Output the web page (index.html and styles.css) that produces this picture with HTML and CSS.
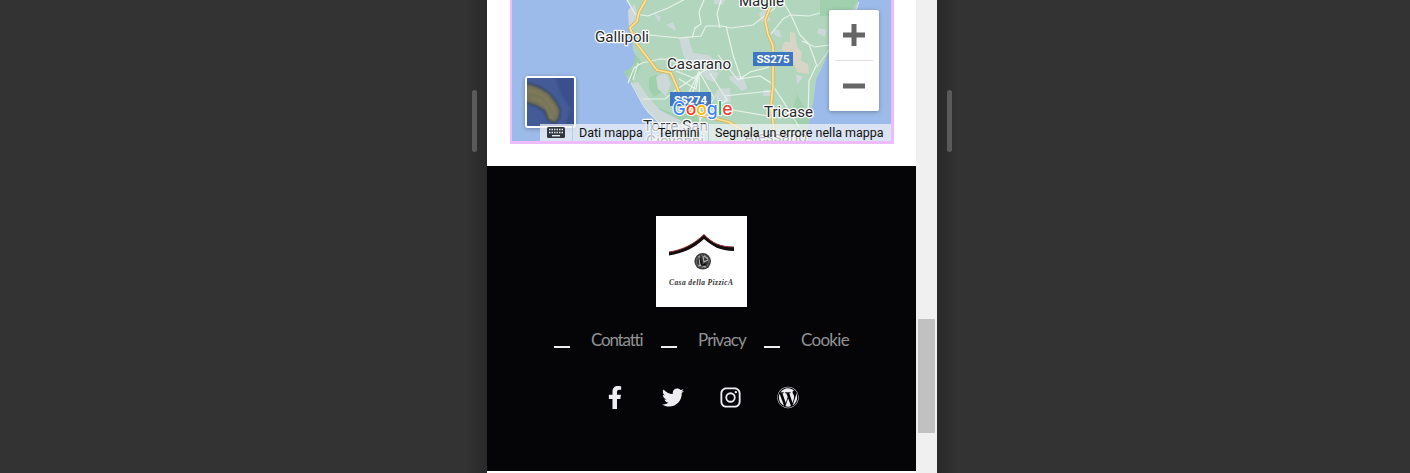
FILE: index.html
```html
<!DOCTYPE html>
<html lang="it">
<head>
<meta charset="utf-8">
<title>Casa della Pizzica</title>
<link rel="stylesheet" href="styles.css">
</head>
<body>
<div class="stage">
  <aside class="side side-left"><span class="handle"></span></aside>
  <main class="device">
    <div class="page">
      <section class="map-section">
        <div class="map">
          <svg class="map-canvas" viewBox="512 0 379 141" aria-hidden="true">
            <rect x="512" width="379" height="141" fill="#9dbbea"/>
            <path fill="#b2d6bd" d="M626 0L632 8 631 18 629 28 632 38 633 50 637 59 631 68 624 72 630 82 637 92 643 104 652 116 664 128 672 136 675 141H803L808 124 813 104 816 80 823 65 829 51 841 34 852 14 857 8 858 0Z"/>
            <g fill="#9bcda9">
              <path d="M635 54l7 8-3 8-7 12-8-10 9-5zM649 78l8-4 5 18-8 5-5-8zM648 104l26 10 20-4 8 17-20 10-17-5z" opacity=".8"/>
              <path d="M797 94l10 18 5-4-5 26-13-7-2-15zM820 0h38l-9 14-29 2z" opacity=".75"/>
            </g>
            <g fill="#cdd8d8">
              <path d="M632 83l6-1 10 15 12 13 20 10 15 15-10 3-18-9-20-17zM656 77l10-5 5 12-5 12-8-7zM628 10l7-6 2 10-5 20-3-6zM654 13l7 4-2 6zM666 25l7-3 3 9zM679 38l9-2 5 17 15 2 10 7-18 1-10 8-7-17zM642 31l5-2 4 6-8 1zM714 0l11 0-3 5-8-1zM759 13l7-3 5 11-9 1zM773 30l6 0 3 8-8-3zM730 76l13 0 4 12-5 3-13-12zM718 89l12-1 1 14-12 2-5-8zM796 74l7 3-6 8zM764 90l7 0 0 6-8 0zM819 28l8 2-2 7-8-4zM701 72l8-3 10 4-5 9-8-3z"/>
            </g>
            <path fill="#d9d5c6" d="M790 32l5 1 2 14 5 5-1 9 7 3 1 10-12-2-5-14-3-5-8-3 3-8 6 0z"/>
            <g fill="none" stroke="#e6f2ea" stroke-width="1.200">
              <path d="M627 0l8 14 13 2 20-8 25-13M649 35l31 3 21-2 5-10 16 0 9 2 22-3 22-17M692 38l3-10 6-4-2-12 5-12M720 28l-3-14 4-14M726 26l7 29 8 23-3 2-20-25M740 79l10-7 19-5M740 79l20-3 11 7 12 18 16 26M628 83l6-15 8-5 18-4 28 1M633 80l5-17M643 99h22l11-9 26-18 15-8M676 71l20 8M699 71l-3 18-17-10M699 71l-11 38M699 71l1 52M699 71l15 27M699 71l-18 39M710 73l17 27-18 13-27 0M724 96l47-5M714 98l-14 22M771 34l12-15 7-4 19 1 11-3M782 0l9 15 9 20 9 9 8 22M802 41l13 6 14-2M703 112l18 3 12-5 35 6M816 66l-7 15-1 36M757 0l12 12"/>
            </g>
            <g fill="none" stroke-linejoin="round">
              <path stroke="#d9b65e" stroke-width="3.400" d="M646 0l-7 12-2 9-7 7 7 16 20 26 14 3 8 19 14 21 36 9 17 10M770 8l-5 12 3 14 5 12v40l-2 20 4 32"/>
              <path stroke="#fce39b" stroke-width="1.700" d="M646 0l-7 12-2 9-7 7 7 16 20 26 14 3 8 19 14 21 36 9 17 10M770 8l-5 12 3 14 5 12v40l-2 20 4 32"/>
            </g>
            <path fill="none" stroke="#dfeaf0" d="M631 83l13 24 13 14 18 17M859 2l-3 8-6 3-11 20-10 17-12 17"/>
            <rect x="670" y="92" width="41" height="14" fill="#3f76c2"/>
            <rect x="753" y="52" width="40" height="14" fill="#3f76c2"/>
            <g class="road-label">
              <text x="674" y="103.500" textLength="33">SS274</text>
              <text x="756.500" y="63" textLength="33">SS275</text>
            </g>
            <g class="town-label">
              <text x="595" y="42" textLength="54" lengthAdjust="spacingAndGlyphs">Gallipoli</text>
              <text x="667" y="68.500" textLength="64" lengthAdjust="spacingAndGlyphs">Casarano</text>
              <text x="739" y="5.500" textLength="45" lengthAdjust="spacingAndGlyphs">Maglie</text>
              <text x="764" y="117" textLength="49" lengthAdjust="spacingAndGlyphs">Tricase</text>
              <text x="643" y="130.500" textLength="65" lengthAdjust="spacingAndGlyphs">Torre San</text>
              <text x="646" y="145.500" textLength="58" lengthAdjust="spacingAndGlyphs">Giovanni</text>
              <text x="744" y="141.500" textLength="63" lengthAdjust="spacingAndGlyphs">Alessano</text>
            </g>
            <text class="google-label" x="672.500" y="115" textLength="60" lengthAdjust="spacingAndGlyphs"><tspan fill="#4285f4">G</tspan><tspan fill="#ea4335">o</tspan><tspan fill="#fbbc05">o</tspan><tspan fill="#4285f4">g</tspan><tspan fill="#34a853">l</tspan><tspan fill="#ea4335">e</tspan></text>
          </svg>
          <div class="satellite">
            <svg viewBox="0 0 47 48" aria-hidden="true">
              <defs><filter id="soft"><feGaussianBlur stdDeviation=".8"/></filter></defs>
              <rect width="47" height="48" fill="#435c97"/>
              <path d="M28 0h19v48H38L43 30 35 18z" fill="#3b508d" filter="url(#soft)"/>
              <g filter="url(#soft)">
                <path d="M-2 5L6 7 14 10 22 15 29 24 33 32 32 40 28 45 21 42 18 33 10 28-2 24Z" fill="#74735a" stroke="#2c3b55" stroke-width="1.500"/>
                <path d="M0 13l9 1 9 5 7 9 3 8M3 20l10 2 7 7 5 12" fill="none" stroke="#827c59" stroke-width="2.500"/>
              </g>
            </svg>
          </div>
          <div class="zoom">
            <button class="zoom-button" aria-label="Zoom avanti"><svg viewBox="0 0 22 22"><path d="M8.500 0h5v8.500H22v5h-8.500V22h-5v-8.500H0v-5h8.500z"/></svg></button>
            <button class="zoom-button" aria-label="Zoom indietro"><svg viewBox="0 0 22 22"><path d="M0 8.500h22v5H0z"/></svg></button>
          </div>
          <div class="attribution">
            <span class="keys"><svg viewBox="0 0 18 11" aria-hidden="true"><rect width="18" height="11" rx="1.500" fill="#33383e"/><path d="M2 2.500h14M2 5.500h14" stroke="#e4eaf2" stroke-width="1.500" stroke-dasharray="1.500 1"/><path d="M5 8.700h8" stroke="#e4eaf2" stroke-width="1.400"/></svg></span>
            <span class="credit credit-data">Dati mappa</span>
            <span class="credit credit-terms">Termini</span>
            <span class="credit credit-report">Segnala un errore nella mappa</span>
          </div>
        </div>
      </section>
      <footer class="footer">
        <svg class="logo" viewBox="0 0 91 91" role="img" aria-label="Casa della Pizzica">
          <rect width="91" height="91" fill="#fff"/>
          <path d="M13 36C27 34 38 28 48 18.500 56 27 64 31 78 31V35C64 35 56 30 48 23 38 32.500 27 37 13 39.500Z" fill="#160c0d"/>
          <path d="M13 36C27 34 38 28 48 18.500 56 27 64 31 78 31" fill="none" stroke="#8c3036"/>
          <circle cx="46.700" cy="45.300" r="8.300" fill="#393939"/>
          <circle cx="46.700" cy="45.300" r="6.300" fill="none" stroke="#999" stroke-width=".8" stroke-dasharray="2 1"/>
          <path d="M43 40l1 9 6 2M47 40l1 6 4-2M42 50l6-2M48 40l4 3" fill="none" stroke="#b5b5b5" stroke-width="1.100"/>
          <path d="M44 42l2 7 4-1" fill="none" stroke="#111" stroke-width="1.500"/>
          <text class="logo-text" x="13" y="69" textLength="64">Casa della PizzicA</text>
        </svg>
        <nav class="links">
          <a class="link link-contact">Contatti</a>
          <a class="link link-privacy">Privacy</a>
          <a class="link link-cookie">Cookie</a>
        </nav>
        <div class="social">
          <svg viewBox="0 0 320 512"><path d="M279 288l14-93h-89v-60c0-25 12-50 52-50h41V7s-37-7-72-7c-73 0-121 44-121 125v70H23v93h81v224h100V288z"/></svg>
          <svg viewBox="0 0 512 512"><path d="M459 152c1 4 1 9 1 14 0 138-106 298-299 298-59 0-114-17-161-47 8 1 16 1 25 1 49 0 94-16 130-45-46-1-84-31-98-73 6 1 13 2 20 2 9 0 19-1 28-4-48-10-84-52-84-103v-1c14 8 30 13 47 13-28-19-47-51-47-87 0-19 5-37 14-53 52 64 130 105 217 110-2-8-3-16-3-24 0-58 47-105 105-105 30 0 58 13 77 33 24-5 46-13 66-25-8 24-24 45-46 58 21-2 42-8 61-16-15 21-33 39-53 54z"/></svg>
          <svg viewBox="0 0 448 512"><path fill-rule="evenodd" d="M132 32h184c73 0 132 59 132 132v184c0 73-59 132-132 132H132C59 480 0 421 0 348V164C0 91 59 32 132 32zm0 41c-50 0-91 41-91 91v184c0 50 41 91 91 91h184c50 0 91-41 91-91V164c0-50-41-91-91-91zM224 141a115 115 0 1 0 0 230 115 115 0 0 0 0-230zm0 40a75 75 0 1 1 0 150 75 75 0 0 1 0-150z"/><circle cx="343" cy="136" r="27"/></svg>
          <svg viewBox="0 0 512 512"><path d="M61.700 169.400l101.500 278C92.200 413 43.300 340.200 43.300 256c0-30.900 6.600-60.100 18.400-86.600zm337.900 75.900c0-26.300-9.400-44.500-17.500-58.700-10.800-17.500-20.900-32.400-20.900-49.900 0-19.600 14.800-37.800 35.700-37.800.9 0 1.800.1 2.800.2-37.900-34.700-88.300-55.900-143.700-55.900-74.300 0-139.700 38.100-177.800 95.900 5 .2 9.700.3 13.700.3 22.200 0 56.700-2.700 56.700-2.700 11.500-.7 12.800 16.200 1.400 17.500 0 0-11.500 1.300-24.300 2l77.500 230.400L249.800 247l-33.100-90.800c-11.500-.7-22.300-2-22.300-2-11.500-.7-10.100-18.200 1.300-17.500 0 0 35.100 2.700 56 2.700 22.200 0 56.700-2.700 56.700-2.700 11.500-.7 12.800 16.200 1.400 17.500 0 0-11.500 1.300-24.300 2l76.900 228.700 21.200-70.900c9-29.400 16-50.500 16-68.700zm-139.900 29.300l-63.800 185.500c19.100 5.600 39.200 8.700 60.100 8.700 24.800 0 48.500-4.300 70.600-12.100-.6-.9-1.100-1.900-1.500-2.900zm183-120.700c.9 6.800 1.400 14 1.400 21.900 0 21.600-4 45.800-16.200 76.200l-65 187.900C426.200 403 468.700 334.500 468.700 256c0-37-9.400-71.800-26-102.100zM504 256c0 136.800-111.300 248-248 248C119.200 504 8 392.700 8 256 8 119.200 119.200 8 256 8c136.700 0 248 111.200 248 248zm-11.400 0c0-130.500-106.200-236.600-236.600-236.600C125.500 19.400 19.400 125.500 19.400 256S125.600 492.600 256 492.600c130.500 0 236.600-106.100 236.600-236.600z"/></svg>
        </div>
      </footer>
    </div>
    <div class="scrollbar"><div class="thumb"></div></div>
  </main>
  <aside class="side side-right"><span class="handle"></span></aside>
</div>
</body>
</html>
```
FILE: styles.css
```css
* { box-sizing: border-box; }

body { margin: 0; overflow: hidden; background: #333; }

.stage { display: flex; height: 473px; }

.side { display: flex; padding-top: 90px; }
.side-left {
  width: 487px;
  justify-content: flex-end;
  padding-right: 10px;
  background: linear-gradient(to left, #292929, #333 22px);
}
.side-right {
  flex: 1;
  padding-left: 10px;
  background: linear-gradient(to right, #292929, #333 22px);
}
.handle { width: 5px; height: 62px; border-radius: 3px; background: #5a5a5a; }

.device { display: flex; width: 450px; }
.page { width: 429px; background: #fff; }
.scrollbar { width: 21px; padding: 319px 2px 0; background: #f0f0f0; }
.thumb { height: 114px; background: #c1c1c1; }

.map-section { height: 166px; padding: 0 23px; }
.map {
  position: relative;
  width: 384px;
  height: 144px;
  border: solid #efbcfb;
  border-width: 0 3px 3px 2px;
  overflow: hidden;
}
.map-canvas { display: block; width: 379px; height: 141px; }
.town-label {
  font: 15.5px Roboto, sans-serif;
  fill: #25282b;
  stroke: #fff;
  stroke-width: 2.5px;
  stroke-linejoin: round;
  paint-order: stroke;
}
.road-label { font: bold 11.5px Roboto, sans-serif; fill: #fff; }
.google-label {
  font: 500 18px Inter, sans-serif;
  stroke: #fff;
  stroke-width: 2px;
  stroke-linejoin: round;
  paint-order: stroke;
}

.satellite {
  position: absolute;
  left: 13px;
  top: 76px;
  width: 51px;
  height: 52px;
  border: 2px solid #fff;
  border-radius: 3px;
  box-shadow: 0 1px 4px rgba(0, 0, 0, .3);
  overflow: hidden;
}
.satellite svg { display: block; width: 47px; height: 48px; }

.zoom {
  position: absolute;
  right: 12px;
  top: 10px;
  width: 50px;
  height: 101px;
  padding: 0 6px;
  border-radius: 2px;
  background: #fff;
  box-shadow: 0 1px 4px rgba(0, 0, 0, .3);
}
.zoom-button {
  display: flex;
  align-items: center;
  justify-content: center;
  width: 38px;
  height: 50px;
  padding: 0;
  border: 0;
  background: none;
}
.zoom-button + .zoom-button { height: 51px; border-top: 1px solid #e0e0e0; }
.zoom-button svg { width: 22px; height: 22px; fill: #666; }

.attribution {
  position: absolute;
  right: 0;
  bottom: 0;
  display: flex;
  width: 351px;
  height: 17px;
  background: rgba(240, 243, 247, .72);
  font: 12.5px/17px Roboto, sans-serif;
  color: #111;
  white-space: nowrap;
}
.keys { display: flex; align-items: center; width: 32px; padding-left: 7px; }
.keys svg { width: 18px; height: 11px; }
.credit { border-left: 1px solid #bdcddd; padding-left: 6px; }
.credit-data { width: 79px; }
.credit-terms { width: 57px; }
.credit-report { flex: 1; }

.footer {
  display: flex;
  flex-direction: column;
  align-items: center;
  height: 305px;
  padding-top: 50px;
  background: #050507;
}
.logo { width: 91px; height: 91px; }
.logo-text { font: italic bold 7.5px "Liberation Serif", serif; fill: #333; }

.links {
  display: flex;
  width: 295px;
  height: 24px;
  margin-top: 21px;
  font: 17px/24px Lato, sans-serif;
  color: #929294;
}
.link { display: flex; white-space: nowrap; }
.link::before {
  content: "";
  flex: none;
  width: 16px;
  height: 2px;
  margin: 18px 21px 0 0;
  background: #eee;
}
.link-contact { width: 107px; letter-spacing: -1.2px; }
.link-privacy { width: 103px; letter-spacing: -.9px; }
.link-cookie { letter-spacing: -.7px; }

.social {
  display: flex;
  justify-content: space-between;
  width: 195px;
  height: 23px;
  margin: 34px 1px 0 0;
}
.social svg { width: 22px; height: 23px; fill: #eeeef2; }
.social svg:nth-child(3) { width: 21px; }
```
